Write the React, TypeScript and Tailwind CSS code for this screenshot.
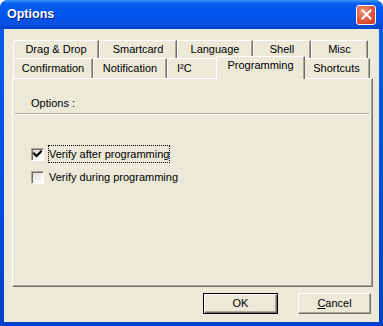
import React from "react";

const font = { fontFamily: '"Liberation Sans", Arial, sans-serif' };

function Tab({ label, w, selected = false, h = 18, extra = "" }: { label: React.ReactNode; w: number; selected?: boolean; h?: number; extra?: string }) {
  if (selected) {
    return (
      <div
        className="relative z-10 -mx-[2px] -mt-[2px] flex h-[23px] items-start justify-center rounded-tl-[2px] border-l border-t border-r border-l-white border-t-white border-r-[#716f64] bg-[#ece9d8] pt-[2px] shadow-[inset_-1px_0_0_#aca899]"
        style={{ width: w + 4 }}
      >
        <span className="leading-[13px]">{label}</span>
      </div>
    );
  }
  return (
    <div
      className={"flex items-center justify-center rounded-tl-[2px] border-l border-t border-r border-l-white border-t-white border-r-[#716f64] shadow-[inset_-1px_0_0_#aca899] " + extra}
      style={{ width: w, height: h }}
    >
      <span className="leading-[13px]">{label}</span>
    </div>
  );
}

function Check({ checked, label, focus }: { checked: boolean; label: string; focus?: boolean }) {
  return (
    <div className="flex h-[18px] items-center pl-[18px]">
      <div className="flex h-[13px] w-[13px] items-center justify-center border border-t-[#aca899] border-l-[#aca899] border-r-white border-b-white bg-[linear-gradient(135deg,#dcdbd5,#ffffff)] shadow-[inset_1px_1px_0_#716f64]">
        {checked && (
          <svg width="9" height="9" viewBox="0 0 9 9">
            <path d="M1 3.5 L3.5 6 L8 1.5" stroke="#000" strokeWidth="2" fill="none" strokeLinecap="square" />
          </svg>
        )}
      </div>
      <div
        className={
          "ml-[4px] flex h-[18px] items-center px-[1px] " +
          (focus ? "outline-1 outline-dotted outline-[#000] -outline-offset-1" : "")
        }
      >
        <span className="leading-[13px]">{label}</span>
      </div>
    </div>
  );
}

export default function App() {
  return (
    <div className="h-[326px] w-[383px] overflow-hidden bg-white">
      <div
        className="flex h-[326px] w-[383px] flex-col rounded-t-[8px] bg-[linear-gradient(to_bottom,#0a5ee8_0%,#0055e5_40%,#0041c8_100%)] text-[11px] text-black"
        style={font}
      >
        {/* title bar */}
        <div className="flex h-[29px] items-center rounded-t-[8px] bg-[linear-gradient(to_bottom,#3d95ff_0%,#0a60ec_12%,#0058ee_30%,#0254eb_60%,#0a50de_85%,#0243c8_100%)] pl-[7px] pr-[7px]">
          <span className="text-[12.5px] font-bold text-white [text-shadow:1px_1px_0_#0a1f80]">
            Options
          </span>
          <div className="ml-auto flex h-[20px] w-[20px] items-center justify-center rounded-[3px] border border-white bg-[radial-gradient(circle_at_35%_30%,#f19376,#e0553a_55%,#c4381e)]">
            <svg width="11" height="11" viewBox="0 0 11 11">
              <path d="M1.5 1.5 L9.5 9.5 M9.5 1.5 L1.5 9.5" stroke="#fff" strokeWidth="2" strokeLinecap="square" />
            </svg>
          </div>
        </div>

        {/* body */}
        <div className="mx-[4px] mb-[4px] flex flex-1 flex-col bg-[#ece9d8] pl-[8px] pr-[7px] pt-[11px]">
          {/* tab rows */}
          <div className="flex h-[18px] pl-[1px]">
            <Tab label="Drag & Drop" w={86} />
            <Tab label="Smartcard" w={78} />
            <Tab label="Language" w={76} />
            <Tab label="Shell" w={58} />
            <Tab label="Misc" w={57} />
          </div>
          <div className="flex h-[20px] pl-[1px]">
            <Tab label="Confirmation" w={80} h={20} />
            <Tab label="Notification" w={74} h={20} />
            <Tab label={<>I²C</>} w={51} h={20} extra="!justify-start pl-[9px]" />
            <Tab label="Programming" w={85} selected />
            <Tab label="Shortcuts" w={67} h={20} />
          </div>

          {/* panel */}
          <div className="flex h-[209px] w-[361px] flex-col border border-t-white border-l-white border-r-[#716f64] border-b-[#716f64] shadow-[inset_-1px_-1px_0_#aca899]">
            <div className="pl-[18px] pt-[18px] leading-[13px]">Options :</div>
            <div className="ml-[2px] mr-[3px] mt-[3px] h-[2px] border-t border-b border-t-[#aca899] border-b-white" />
            <div className="mt-[30px] flex flex-col gap-[5px]">
              <Check checked label="Verify after programming" focus />
              <Check checked={false} label="Verify during programming" />
            </div>
          </div>

          {/* buttons */}
          <div className="mt-[6px] flex justify-end gap-[20px] pr-[1px]">
            <button className="flex h-[21px] w-[75px] items-center justify-center border border-black bg-[#ece9d8] shadow-[inset_1px_1px_0_#fff,inset_-1px_-1px_0_#716f64,inset_-2px_-2px_0_#aca899]">
              OK
            </button>
            <button className="flex h-[21px] w-[73px] items-center justify-center border border-t-white border-l-white border-r-[#716f64] border-b-[#716f64] bg-[#ece9d8] shadow-[inset_-1px_-1px_0_#aca899]">
              <span>
                <span className="underline">C</span>ancel
              </span>
            </button>
          </div>
        </div>
      </div>
    </div>
  );
}
